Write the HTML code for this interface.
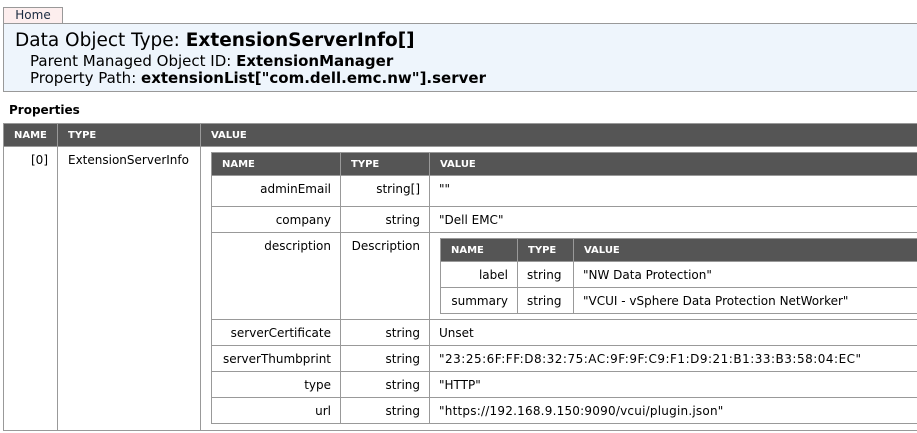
<!DOCTYPE html>
<html><head><style>
html,body{margin:0;padding:0;width:917px;height:433px;overflow:hidden;background:#fff;font-family:"DejaVu Sans","Liberation Sans",sans-serif;font-size:12px;color:#000}
.abs{position:absolute}
#home{left:3px;top:7px;width:60px;height:16px;background:#fdeeee;border:1px solid #999;border-bottom:none;box-sizing:border-box;text-align:center;font-size:12px;line-height:15px;color:#1a2a40}
#hdr{left:3px;top:23px;width:1000px;height:69px;background:#eef5fc;border:1px solid #999;box-sizing:border-box}
table{border-collapse:collapse;table-layout:fixed;position:absolute}
td,th{border:1px solid #999;padding:0 9px;vertical-align:top;white-space:nowrap;overflow:hidden;font-size:12px}
th{background:#555;color:#fff;font-size:10px;font-weight:bold;text-align:left;vertical-align:middle;padding:0 10px}
td{padding-top:6px}
.r{text-align:right}
</style></head><body>
<div id="home" class="abs">Home</div>
<div id="hdr" class="abs">
 <div class="abs" style="left:11px;top:6px;font-size:18.5px;white-space:nowrap">Data Object Type: <b>ExtensionServerInfo[]</b></div>
 <div class="abs" style="left:26px;top:28px;font-size:15px;white-space:nowrap">Parent Managed Object ID: <b>ExtensionManager</b></div>
 <div class="abs" style="left:26px;top:45px;font-size:15px;white-space:nowrap">Property Path: <b>extensionList["com.dell.emc.nw"].server</b></div>
</div>
<div class="abs" style="left:9px;top:103px;font-weight:bold;font-size:12px">Properties</div>

<table style="left:3px;top:123px;width:1000px">
<col style="width:54px"><col style="width:143px"><col>
<tr style="height:23px"><th>NAME</th><th>TYPE</th><th>VALUE</th></tr>
<tr style="height:284px"><td class="r">[0]</td><td style="padding-left:10px">ExtensionServerInfo</td><td></td></tr>
</table>

<table style="left:211px;top:152px;width:800px">
<col style="width:129px"><col style="width:89px"><col>
<tr style="height:23px"><th>NAME</th><th>TYPE</th><th>VALUE</th></tr>
<tr style="height:31px"><td class="r">adminEmail</td><td class="r">string[]</td><td>""</td></tr>
<tr style="height:26px"><td class="r">company</td><td class="r">string</td><td>"Dell EMC"</td></tr>
<tr style="height:87px"><td class="r">description</td><td class="r">Description</td><td></td></tr>
<tr style="height:26px"><td class="r">serverCertificate</td><td class="r">string</td><td>Unset</td></tr>
<tr style="height:26px"><td class="r">serverThumbprint</td><td class="r">string</td><td style="letter-spacing:0.5px">"23:25:6F:FF:D8:32:75:AC:9F:9F:C9:F1:D9:21:B1:33:B3:58:04:EC"</td></tr>
<tr style="height:26px"><td class="r">type</td><td class="r">string</td><td>"HTTP"</td></tr>
<tr style="height:26px"><td class="r">url</td><td class="r">string</td><td style="letter-spacing:0.22px">"https://192.168.9.150:9090/vcui/plugin.json"</td></tr>
</table>

<table style="left:440px;top:238px;width:600px">
<col style="width:77px"><col style="width:56px"><col>
<tr style="height:23px"><th>NAME</th><th>TYPE</th><th>VALUE</th></tr>
<tr style="height:26px"><td class="r">label</td><td>string</td><td>"NW Data Protection"</td></tr>
<tr style="height:26px"><td class="r">summary</td><td>string</td><td>"VCUI - vSphere Data Protection NetWorker"</td></tr>
</table>
</body></html>
